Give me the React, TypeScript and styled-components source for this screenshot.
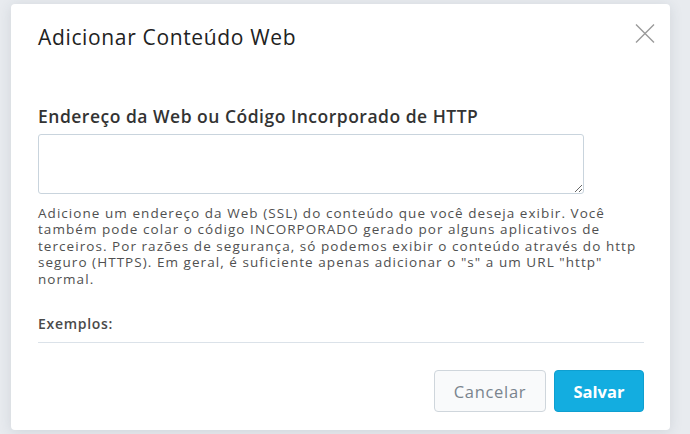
import React from "react";
import styled, { createGlobalStyle } from "styled-components";

const GlobalStyle = createGlobalStyle`
  html, body { margin: 0; padding: 0; }
  body {
    background: #e8ebef;
    font-family: "Open Sans", Lato, sans-serif;
    -webkit-font-smoothing: antialiased;
  }
  #root { width: 690px; height: 434px; overflow: hidden; }
`;

const Page = styled.div`
  width: 690px;
  height: 434px;
  display: flex;
  align-items: flex-start;
  padding: 4px 0 0 11px;
  box-sizing: border-box;
  background: #e8ebef;
`;

const Modal = styled.div`
  position: relative;
  width: 659px;
  height: 426px;
  box-sizing: border-box;
  background: #fff;
  border-radius: 4px;
  box-shadow: 0 2px 14px rgba(40, 55, 75, 0.12);
  display: flex;
  flex-direction: column;
  padding: 19px 26px 18px 27px;
`;

const Header = styled.div`
  display: flex;
  align-items: center;
  justify-content: space-between;
  height: 28px;
`;

const Title = styled.h1`
  margin: 0;
  font-size: 21px;
  line-height: 28px;
  font-weight: 400;
  letter-spacing: 0.65px;
  color: #222;
`;

const CloseButton = styled.button`
  border: 0;
  background: transparent;
  padding: 0;
  margin: -8px -12px 0 0;
  width: 22px;
  height: 22px;
  display: flex;
  align-items: center;
  justify-content: center;
  cursor: pointer;
`;

const Body = styled.div`
  flex: 1;
  display: flex;
  flex-direction: column;
  padding-top: 53px;
`;

const Label = styled.label`
  font-size: 17.5px;
  line-height: 24px;
  font-weight: 600;
  letter-spacing: 0.5px;
  color: #333;
  margin-bottom: 6px;
`;

const TextArea = styled.textarea`
  width: 546px;
  height: 60px;
  box-sizing: border-box;
  border: 1px solid #c9d4dd;
  border-radius: 3px;
  resize: vertical;
  font-family: inherit;
  outline: none;
  margin: 0;
  display: block;
`;

const Help = styled.p`
  margin: 11px 0 0;
  font-size: 13.5px;
  line-height: 16.4px;
  letter-spacing: 1.05px;
  white-space: nowrap;
  color: #505050;
`;

const Examples = styled.div`
  margin-top: 27px;
  padding-bottom: 8px;
  border-bottom: 1px solid #dbe2e9;
  font-size: 14px;
  line-height: 20px;
  font-weight: 600;
  letter-spacing: 0.7px;
  color: #4a4a4a;
`;

const Footer = styled.div`
  margin-top: auto;
  display: flex;
  justify-content: flex-end;
  gap: 8px;
`;

const Button = styled.button<{ $primary?: boolean }>`
  height: 42px;
  box-sizing: border-box;
  border-radius: 4px;
  font-family: inherit;
  font-size: 16.5px;
  padding: 0;
  letter-spacing: ${(p) => (p.$primary ? "0" : "0.7px")};
  width: ${(p) => (p.$primary ? "90px" : "112px")};
  border: 1px solid ${(p) => (p.$primary ? "#0e9fd0" : "#cfd6dc")};
  background: ${(p) => (p.$primary ? "#13ade0" : "#f9fafb")};
  color: ${(p) => (p.$primary ? "#fff" : "#7a848e")};
  font-weight: ${(p) => (p.$primary ? 700 : 400)};
  cursor: pointer;
`;

export default function App() {
  return (
    <>
      <GlobalStyle />
      <Page>
        <Modal>
          <Header>
            <Title>Adicionar Conteúdo Web</Title>
            <CloseButton aria-label="Fechar">
              <svg width="20" height="19" viewBox="0 0 20 19">
                <path d="M1 0.5 L19 18.5 M19 0.5 L1 18.5" stroke="#9a9a9a" strokeWidth="1.4" fill="none" />
              </svg>
            </CloseButton>
          </Header>
          <Body>
            <Label>Endereço da Web ou Código Incorporado de HTTP</Label>
            <TextArea />
            <Help>
              Adicione um endereço da Web (SSL) do conteúdo que você deseja exibir. Você
              <br />
              também pode colar o código INCORPORADO gerado por alguns aplicativos de
              <br />
              terceiros. Por razões de segurança, só podemos exibir o conteúdo através do http
              <br />
              seguro (HTTPS). Em geral, é suficiente apenas adicionar o "s" a um URL "http"
              <br />
              normal.
            </Help>
            <Examples>Exemplos:</Examples>
          </Body>
          <Footer>
            <Button>Cancelar</Button>
            <Button $primary>Salvar</Button>
          </Footer>
        </Modal>
      </Page>
    </>
  );
}
